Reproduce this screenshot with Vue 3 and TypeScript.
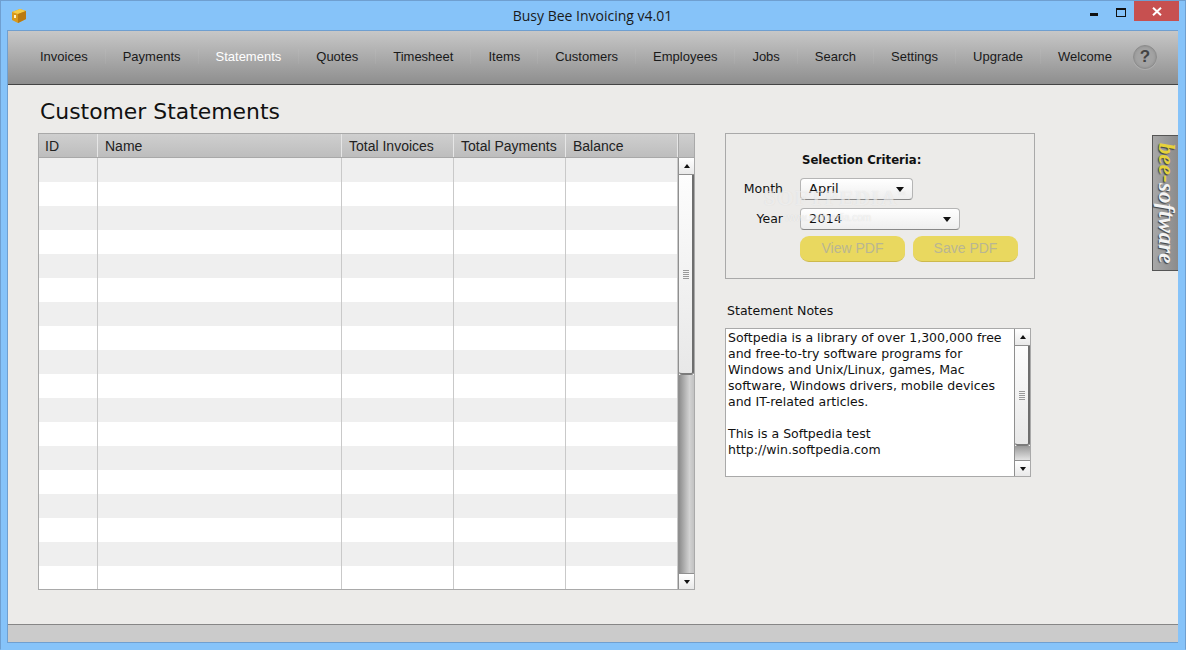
<script setup lang="ts">
const tabs: string[] = ['Invoices','Payments','Statements','Quotes','Timesheet','Items','Customers','Employees','Jobs','Search','Settings','Upgrade','Welcome']
const cols: { label: string; cls: string }[] = [
  { label: 'ID', cls: 'c-id' },
  { label: 'Name', cls: 'c-name' },
  { label: 'Total Invoices', cls: 'c-num' },
  { label: 'Total Payments', cls: 'c-num' },
  { label: 'Balance', cls: 'c-num' },
]
const rows: number[] = Array.from({ length: 18 }, (_, i) => i)
const notes: string[] = [
  'Softpedia is a library of over 1,300,000 free',
  'and free-to-try software programs for',
  'Windows and Unix/Linux, games, Mac',
  'software, Windows drivers, mobile devices',
  'and IT-related articles.',
  '\u00a0',
  'This is a Softpedia test',
  'http://win.softpedia.com',
]
</script>

<template>
  <div class="window">
    <header class="titlebar">
      <svg class="appicon" width="16" height="16" viewBox="0 0 16 16">
        <path d="M1 4 L9 1 L15 3 L15 11 L7 15 L1 12 Z" fill="#d99a1c" />
        <path d="M1 4 L9 1 L15 3 L7 6 Z" fill="#f5cd4a" />
        <path d="M7 6 L15 3 L15 11 L7 15 Z" fill="#b97a12" />
        <rect x="3" y="7" width="2" height="3" fill="#fff3c4" />
      </svg>
      <span class="title">Busy Bee Invoicing v4.01</span>
      <div class="controls">
        <span class="min"></span>
        <span class="max"></span>
        <span class="close">
          <svg width="10" height="9" viewBox="0 0 10 9"><path d="M1 0.8 L9 8.2 M9 0.8 L1 8.2" stroke="#fff" stroke-width="2" /></svg>
        </span>
      </div>
    </header>

    <div class="client">
      <nav class="nav">
        <template v-for="(t, i) in tabs" :key="t">
          <span v-if="i > 0" class="sep"></span>
          <span class="tab" :class="{ active: t === 'Statements' }">{{ t }}</span>
        </template>
        <span class="help">?</span>
      </nav>

      <main class="main">
        <h1 class="heading">Customer Statements</h1>
        <div class="columns">
          <section class="table">
            <div class="thead">
              <div v-for="c in cols" :key="c.label" class="th" :class="c.cls">{{ c.label }}</div>
              <div class="th corner"></div>
            </div>
            <div class="tbody">
              <div class="rows">
                <div v-for="r in rows" :key="r" class="tr" :class="{ odd: r % 2 === 0 }">
                  <div v-for="c in cols" :key="c.label" class="td" :class="c.cls"></div>
                </div>
              </div>
              <div class="scroll big">
                <div class="sbtn"><span class="up"></span></div>
                <div class="thumb"><span class="grip"></span></div>
                <div class="track"></div>
                <div class="sbtn down-btn"><span class="down"></span></div>
              </div>
            </div>
          </section>

          <aside class="side">
            <section class="criteria">
              <div class="crit-title">Selection Criteria:</div>
              <div class="field">
                <label>Month</label>
                <div class="select month"><span>April</span><i class="arrow"></i></div>
              </div>
              <div class="field">
                <label>Year</label>
                <div class="select year"><span>2014</span><i class="arrow"></i></div>
              </div>
              <div class="buttons">
                <button class="pdf">View PDF</button>
                <button class="pdf">Save PDF</button>
              </div>
              <div class="wm">SOFTPEDIA<sup>™</sup></div>
              <div class="wm2">www.softpedia.com</div>
            </section>

            <div class="notes-label">Statement Notes</div>
            <section class="notes">
              <div class="notes-text">
                <div v-for="(n, i) in notes" :key="i">{{ n }}</div>
              </div>
              <div class="scroll small">
                <div class="sbtn"><span class="up"></span></div>
                <div class="thumb"><span class="grip"></span></div>
                <div class="track"></div>
                <div class="sbtn down-btn"><span class="down"></span></div>
              </div>
            </section>
          </aside>

          <div class="brand"><b>bee-</b><span>software</span></div>
        </div>
      </main>

      <footer class="status"></footer>
    </div>
  </div>
</template>

<style>
html, body { margin: 0; padding: 0; overflow: hidden; }
</style>

<style scoped>
.window {
  width: 1186px; height: 650px; box-sizing: border-box;
  background: #86c3f9; border: 1px solid #6f9fd0; border-bottom-color: #86c3f9;
  display: flex; flex-direction: column; padding: 0 7px 6px 6px;
  font-family: "Liberation Sans", Arial, sans-serif; color: #111; position: relative;
}
.titlebar { height: 29px; flex: none; display: flex; align-items: flex-start; justify-content: center; position: relative; }
.appicon { position: absolute; left: 4px; top: 7px; }
.title { font-family: "Open Sans", sans-serif; font-size: 14px; line-height: 30px; color: #1a1a1a; }
.controls { position: absolute; right: -1px; top: 0; display: flex; align-items: flex-start; }
.min { width: 8px; height: 3px; background: #111; margin: 12px 18px 0 0; }
.max { height: 6px; border: 1px solid #111; border-top-width: 2px; margin: 7px 8px 0 0; width: 8px; }
.close { width: 45px; height: 20px; background: #c75050; display: flex; align-items: center; justify-content: center; }

.client { flex: 1; min-height: 0; display: flex; flex-direction: column; background: #ecebe9; border: 1px solid #6f9fd0; border-width: 1px 0 1px 1px; }

.nav {
  height: 54px; flex: none; box-sizing: border-box; display: flex; align-items: center; padding: 0 0 2px 32px;
  background: linear-gradient(#c7c7c7, #8e8e8e); border-bottom: 1px solid #444;
}
.tab { font-size: 13px; color: #1a1a1a; white-space: nowrap; }
.tab.active { color: #fff; }
.sep { width: 1px; height: 15px; margin: 0 17px; background: rgba(255,255,255,0.05); flex: none; }
.help {
  width: 22px; height: 22px; margin-left: 21px; border-radius: 50%; flex: none;
  background: #a3a3a3; border: 1px solid #8c8c8c; box-shadow: inset 0 0 3px #888, 0 1px 0 rgba(255,255,255,0.15);
  color: #444; font-weight: bold; font-size: 17px; line-height: 22px; text-align: center;
}

.main { flex: 1; min-height: 0; padding: 0 0 0 30px; display: flex; flex-direction: column; }
.heading { margin: 12px 0 0 2px; height: 36px; font: normal 21.9px/30px "DejaVu Sans", Verdana, sans-serif; color: #111; }
.columns { display: flex; align-items: flex-start; }

.table { width: 657px; height: 457px; box-sizing: border-box; border: 1px solid #a9a9a9; display: flex; flex-direction: column; background: #fff; flex: none; }
.thead { display: flex; height: 24px; flex: none; background: linear-gradient(#cfcfcf, #bdbdbd); border-bottom: 1px solid #a8a8a8; box-sizing: border-box; }
.th { font-size: 14px; line-height: 24px; box-sizing: border-box; padding-left: 6px; border-right: 1px solid #e6e6e6; color: #222; }
.c-id { width: 59px; }
.c-name { width: 244px; padding-left: 7px; }
.c-num { width: 112px; padding-left: 7px; }
.corner { flex: 1; border-right: 0; border-left: 1px solid #a8a8a8; }
.tbody { flex: 1; min-height: 0; display: flex; }
.rows { width: 639px; overflow: hidden; flex: none; }
.tr { display: flex; height: 24px; background: #fff; }
.tr.odd { background: #efefef; }
.td { box-sizing: border-box; border-right: 1px solid #c9c9c9; padding: 0; }

.scroll { flex: 1; display: flex; flex-direction: column; background: #fff; border-left: 1px solid #8f8f8f; box-sizing: border-box; }
.sbtn { height: 17px; flex: none; display: flex; align-items: center; justify-content: center; background: linear-gradient(#fff, #e9e9e9); border-bottom: 1px solid #8f8f8f; box-sizing: border-box; }
.down-btn { height: 16px; border-bottom: 0; border-top: 1px solid #8f8f8f; }
.up { width: 0; height: 0; border: 3.5px solid transparent; border-top: 0; border-bottom: 4px solid #111; }
.down { width: 0; height: 0; border: 3.5px solid transparent; border-bottom: 0; border-top: 4px solid #111; }
.thumb { flex: none; display: flex; align-items: center; justify-content: center; background: linear-gradient(#fdfdfd, #e8e8e8); border-right: 2px solid #6e6e6e; border-bottom: 2px solid #7c7c7c; border-radius: 0 0 3px 3px; box-sizing: border-box; }
.big .thumb { height: 200px; }
.small .thumb { height: 100px; }
.grip { width: 6px; height: 9px; background: repeating-linear-gradient(#999 0 1px, #f4f4f4 1px 2px); }
.track { flex: 1; background: linear-gradient(90deg, #8c8c8c, #d2d2d2 70%, #c2c2c2); }
.small .track { background: linear-gradient(#999, #e3e3e3); }

.side { width: 310px; margin-left: 30px; flex: none; font-family: "DejaVu Sans", Verdana, sans-serif; font-size: 12.5px; }
.criteria { position: relative; height: 146px; box-sizing: border-box; border: 1px solid #a9a9a9; padding: 18px 0 0 74px; }
.crit-title { font-weight: bold; font-size: 11.7px; line-height: 16px; margin: 0 0 10px 2px; color: #111; }
.field { display: flex; align-items: center; height: 22px; margin-bottom: 8px; position: relative; }
.field label { position: absolute; right: calc(100% + 17px); white-space: nowrap; font-size: 12.5px; top: 3px; line-height: 16px; }
.select {
  height: 22px; box-sizing: border-box; display: flex; align-items: center; justify-content: space-between;
  border: 1px solid #b5b5b5; border-bottom-color: #888; border-radius: 4px; background: linear-gradient(#fff, #eeeeee);
  padding: 0 8px 2px; font-size: 13px; color: #111;
}
.month { width: 113px; }
.year { width: 160px; }
.arrow { width: 0; height: 0; border: 4px solid transparent; border-bottom: 0; border-top: 5px solid #111; margin-top: 2px; position: relative; z-index: 2; }
.buttons { display: flex; gap: 8px; margin-top: -2px; }
.pdf {
  width: 105px; height: 26px; border: 0; border-bottom: 1px solid #cdb94c; border-radius: 9px; background: #e9d85f;
  font-family: "Liberation Sans", Arial, sans-serif; font-size: 14px; line-height: 22px; color: #b9b692; padding: 0 0 2px;
}
.wm { position: absolute; left: 38px; top: 48px; font: bold 21px/26px "Liberation Serif", serif; letter-spacing: 1.5px; color: rgba(255,255,255,0.5); text-shadow: 0 0 1px rgba(170,170,170,0.3); pointer-events: none; }
.wm sup { font-size: 8px; }
.wm2 { position: absolute; left: 59px; top: 77px; font: 10px/14px "Liberation Sans", sans-serif; color: rgba(255,255,255,0.6); text-shadow: 0 0 1px rgba(170,170,170,0.4); pointer-events: none; }

.notes-label { margin: 24px 0 0 2px; height: 25px; line-height: 15px; font-size: 12.55px; color: #111; }
.notes { width: 306px; height: 149px; box-sizing: border-box; border: 1px solid #a9a9a9; background: #fff; display: flex; }
.notes-text { width: 288px; flex: none; box-sizing: border-box; padding: 1px 0 0 2px; font-size: 12.52px; line-height: 16px; white-space: nowrap; color: #111; }

.brand {
  width: 26px; height: 136px; box-sizing: border-box; margin: 2px 0 0 117px; flex: none;
  background: linear-gradient(90deg, #a8a8a8, #8b8b8b); border: 1px solid #555; border-right: 0;
  writing-mode: vertical-rl; display: flex; align-items: center; justify-content: center;
  font: italic bold 23px/24px "Liberation Serif", serif; color: #f4f4f4; text-shadow: 1px 1px 1px #444;
}
.brand b { color: #e6d23a; }

.status { height: 17px; flex: none; background: #cbcbcb; border-top: 1px solid #868686; }
</style>
